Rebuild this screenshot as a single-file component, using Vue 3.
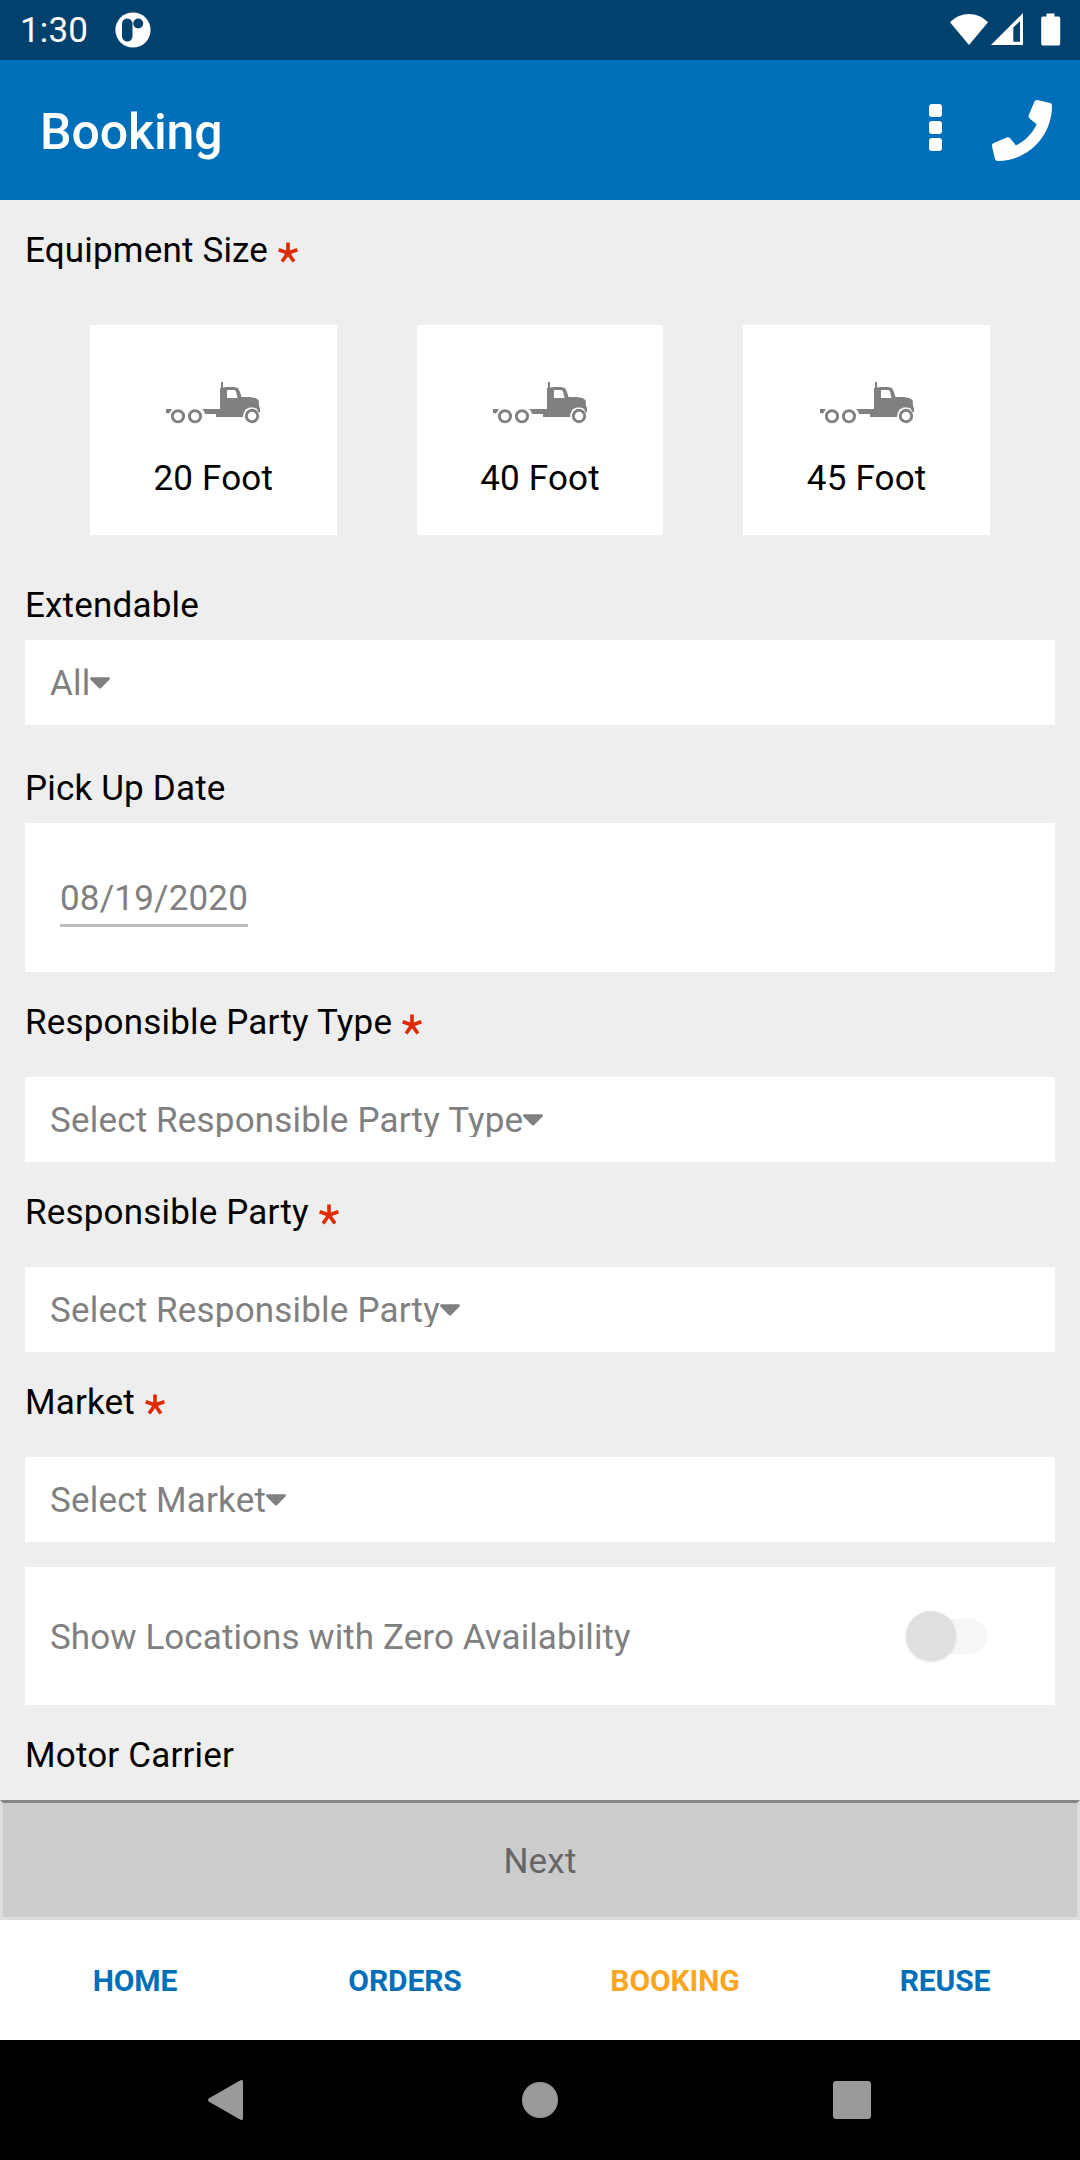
<script setup>
import { ref } from 'vue';

const sizes = ['20 Foot', '40 Foot', '45 Foot'];
const tabs = ['HOME', 'ORDERS', 'BOOKING', 'REUSE'];
const activeTab = ref('BOOKING');
const selectedSize = ref('');
const pickUpDate = ref('08/19/2020');
const showZero = ref(false);

// required dropdowns under the pick up date
const selects = [
  {label: 'Responsible Party Type', placeholder: 'Select Responsible Party Type'},
  {label: 'Responsible Party', placeholder: 'Select Responsible Party'},
  {label: 'Market', placeholder: 'Select Market'}
]
</script>

<template>
  <div class="screen">
    <div class="status-bar">
      <span class="clock">1:30</span>
      <svg class="app-badge" width="36" height="36" viewBox="0 0 36 36">
        <circle cx="18" cy="18" r="17.6" fill="#fff"/>
        <rect x="7" y="6.5" width="10.5" height="23" rx="5.2" fill="#00426d"/>
        <circle cx="23.2" cy="11.5" r="5" fill="#00426d"/>
      </svg>
      <svg class="status-icons" width="112" height="34" viewBox="0 0 112 34" fill="#fff">
        <path d="M0 9.3C10.500-1.900 27.500-1.900 38 9.300L19 32z"/>
        <path fill-rule="evenodd" d="M41 32L73 0v32zM63.300 14.500v14.300h6.700V8z"/>
        <path d="M96.500 0.500h8v3h4q1.700 0 1.700 1.700v25.500q0 1.700-1.700 1.700h-15.600q-1.700 0-1.700-1.700V5.200q0-1.700 1.700-1.700h3.600z"/>
      </svg>
    </div>

    <header class="header">
      <h1>Booking</h1>
      <svg class="dots" width="13" height="47" viewBox="0 0 13 47" fill="#fff">
        <rect width="13" height="13" rx="3"/>
        <rect y="17" width="13" height="13" rx="3"/>
        <rect y="34" width="13" height="13" rx="3"/>
      </svg>
      <svg class="phone" width="60" height="61" viewBox="0 0 512 512" preserveAspectRatio="none" fill="#fff">
        <path d="M493.400 24.600l-104-24c-11.300-2.600-22.900 3.300-27.500 13.900l-48 112c-4.200 9.800-1.400 21.300 6.900 28l60.600 49.600c-36 76.700-98.900 140.500-177.200 177.200l-49.600-60.600c-6.800-8.300-18.200-11.100-28-6.900l-112 48C3.900 366.500-2 378.100.6 389.400l24 104C27.100 504.200 36.700 512 48 512c256.100 0 464-207.500 464-464 0-11.200-7.700-20.900-18.600-23.400z"/>
      </svg>
    </header>

    <main class="form">
      <div class="label">
        Equipment Size
        <svg class="star" width="20" height="21" viewBox="0 0 20 21"><path d="M10 11V.5M10 11L.6 7.800M10 11l9.400-3.200M10 11l-5.900 8.500M10 11l5.900 8.500"/></svg>
      </div>
      <div class="sizes">
        <div v-for="size in sizes" :key="size" class="size-card" @click="selectedSize = size">
          <svg width="94" height="42" viewBox="0 0 94 42" fill="#808080">
            <path fill-rule="evenodd" d="M55 0h2v5.500l4-.5h7l4 1 2 4 1.500 5H84l6 1.300 2.700 2 .3 5.700 1 2v4.500l-1.500-.5-2-3.500-3-1h-4l-4 2-2 4-.5 3.500H50V32H39l-1-3-2-2h18V6h1zM61 8v8h10.500L70 9.500 68.500 8z"/>
            <path d="M0 27h6l-3 4.500-3-.5z"/>
            <g fill="none" stroke="#808080" stroke-width="2.900">
              <circle cx="12" cy="34.300" r="5.600"/>
              <circle cx="29" cy="34.300" r="5.600"/>
              <circle cx="86" cy="34" r="5.700"/>
            </g>
          </svg>
          <span>{{ size }}</span>
        </div>
      </div>

      <div class="label plain">Extendable</div>
      <div class="select">
        <span class="value">All</span>
        <svg class="caret" width="20" height="12" viewBox="10 192 300 170"><path d="M31.300 192h257.300c17.800 0 26.700 21.500 14.100 34.100L174.100 354.700c-7.800 7.800-20.500 7.800-28.300 0L17.200 226.100C4.600 213.500 13.500 192 31.300 192z"/></svg>
      </div>

      <div class="label plain pickup">Pick Up Date</div>
      <div class="date-box">
        <span class="date">{{ pickUpDate }}</span>
      </div>

      <template v-for="item in selects" :key="item.label">
        <div class="label required">
          {{ item.label }}
          <svg class="star" width="20" height="21" viewBox="0 0 20 21"><path d="M10 11V.5M10 11L.6 7.800M10 11l9.400-3.200M10 11l-5.900 8.500M10 11l5.900 8.500"/></svg>
        </div>
        <div class="select">
          <span class="value">{{ item.placeholder }}</span>
          <svg class="caret" width="20" height="12" viewBox="10 192 300 170"><path d="M31.300 192h257.300c17.800 0 26.700 21.500 14.100 34.100L174.100 354.700c-7.800 7.800-20.500 7.800-28.300 0L17.200 226.100C4.600 213.500 13.500 192 31.300 192z"/></svg>
        </div>
      </template>

      <div class="switch-row">
        <span>Show Locations with Zero Availability</span>
        <div class="switch" :class="{ on: showZero }" @click="showZero = !showZero">
          <div class="thumb"></div>
        </div>
      </div>

      <div class="label required">Motor Carrier</div>
    </main>

    <button class="next" disabled>Next</button>

    <nav class="tabs">
      <a v-for="tab in tabs" :key="tab" :class="{ active: tab === activeTab }" @click="activeTab = tab">{{ tab }}</a>
    </nav>

    <div class="nav-bar">
      <svg width="1080" height="120" viewBox="0 0 1080 120" fill="#999">
        <path d="M209 58.300L240 40.500q3-1.500 3 1.500v36q0 3-3 1.500L209 61.700q-2-1.700 0-3.400z"/>
        <circle cx="540" cy="60" r="18"/>
        <rect x="833" y="41" width="38" height="38" rx="3"/>
      </svg>
    </div>
  </div>
</template>

<style>
body {
  margin: 0;
}
</style>

<style scoped>
.screen {
  display: flex;
  flex-direction: column;
  width: 1080px;
  height: 2160px;
  overflow: hidden;
  background: #eee;
  font-family: Roboto, "Liberation Sans", sans-serif;
  font-size: 35px;
  line-height: 41px;
  letter-spacing: 0.18px;
  color: #000;
}

.status-bar {
  display: flex;
  flex: none;
  box-sizing: border-box;
  height: 60px;
  padding: 10px 18px 0 20px;
  background: #00426d;
  color: #fff;
}

.clock {
  width: 95px;
}

.app-badge {
  margin-top: 2px;
}

.status-icons {
  margin: 3px 0 0 auto;
}

.header {
  display: flex;
  flex: none;
  align-items: flex-start;
  box-sizing: border-box;
  height: 140px;
  padding: 40px 28px 0 40px;
  background: #006fba;
  color: #fff;
}

.header h1 {
  margin: 3px auto 0 0;
  font-size: 50px;
  font-weight: 500;
  line-height: 59px;
  letter-spacing: -0.1px;
}

.dots {
  margin-top: 4px;
}

.phone {
  margin-left: 50px;
}

.form {
  flex: none;
  box-sizing: border-box;
  height: 1600px;
  padding: 30px 25px 0;
  overflow: hidden;
}

.label {
  display: flex;
  height: 41px;
}

.star {
  margin: 12px 0 0 10px;
  fill: none;
  stroke: #df2a00;
  stroke-width: 3.6;
}

.sizes {
  display: flex;
  gap: 80px;
  margin: 54px 65px 50px;
}

.size-card {
  display: flex;
  flex: 1;
  flex-direction: column;
  align-items: center;
  box-sizing: border-box;
  height: 210px;
  padding-top: 57px;
  background: #fff;
}

.size-card span {
  margin-top: 34px;
}

.plain {
  margin-bottom: 14px;
}

.pickup {
  margin-top: 43px;
}

.required {
  margin: 30px 0 34px;
}

.select {
  display: flex;
  box-sizing: border-box;
  height: 85px;
  padding: 23px 25px 0;
  background: #fff;
  color: #808080;
}

/* the value box is a bit shorter than the line, descenders get cut */
.value {
  height: 37px;
  overflow: hidden;
}

.caret {
  margin-top: 14px;
  fill: #808080;
}

.date-box {
  box-sizing: border-box;
  height: 149px;
  padding: 55px 35px 0;
  background: #fff;
  color: #808080;
}

.date {
  display: inline-block;
  height: 46px;
  border-bottom: 3px solid #bdbdbd;
}

.switch-row {
  display: flex;
  align-items: center;
  justify-content: space-between;
  box-sizing: border-box;
  height: 138px;
  margin-top: 25px;
  padding: 0 68px 0 25px;
  background: #fff;
  color: #808080;
}

.switch-row span {
  padding-top: 2px;
  letter-spacing: 0.08px;
}

.switch {
  display: flex;
  align-items: center;
  width: 76px;
  height: 35px;
  border-radius: 18px;
  background: #f6f6f6;
}

.thumb {
  width: 50px;
  height: 50px;
  margin-left: -5px;
  border-radius: 50%;
  background: #dfdfdf;
  box-shadow: 0 1px 3px rgba(0, 0, 0, 0.12);
}

.switch.on {
  justify-content: flex-end;
}

.next {
  flex: none;
  width: 1080px;
  height: 120px;
  padding: 2px 0 0;
  border: 3px solid #ddd;
  border-top-color: #888;
  background: #ccc;
  color: #666;
  font: inherit;
  letter-spacing: inherit;
}

.tabs {
  display: flex;
  flex: none;
  height: 120px;
  background: #fff;
}

.tabs a {
  flex: 1;
  color: #006fba;
  font-size: 30px;
  font-weight: 700;
  line-height: 121px;
  letter-spacing: -0.1px;
  text-align: center;
}

.tabs a.active {
  color: #faa61f;
}

.nav-bar {
  flex: none;
  height: 120px;
  background: #000;
}
</style>
